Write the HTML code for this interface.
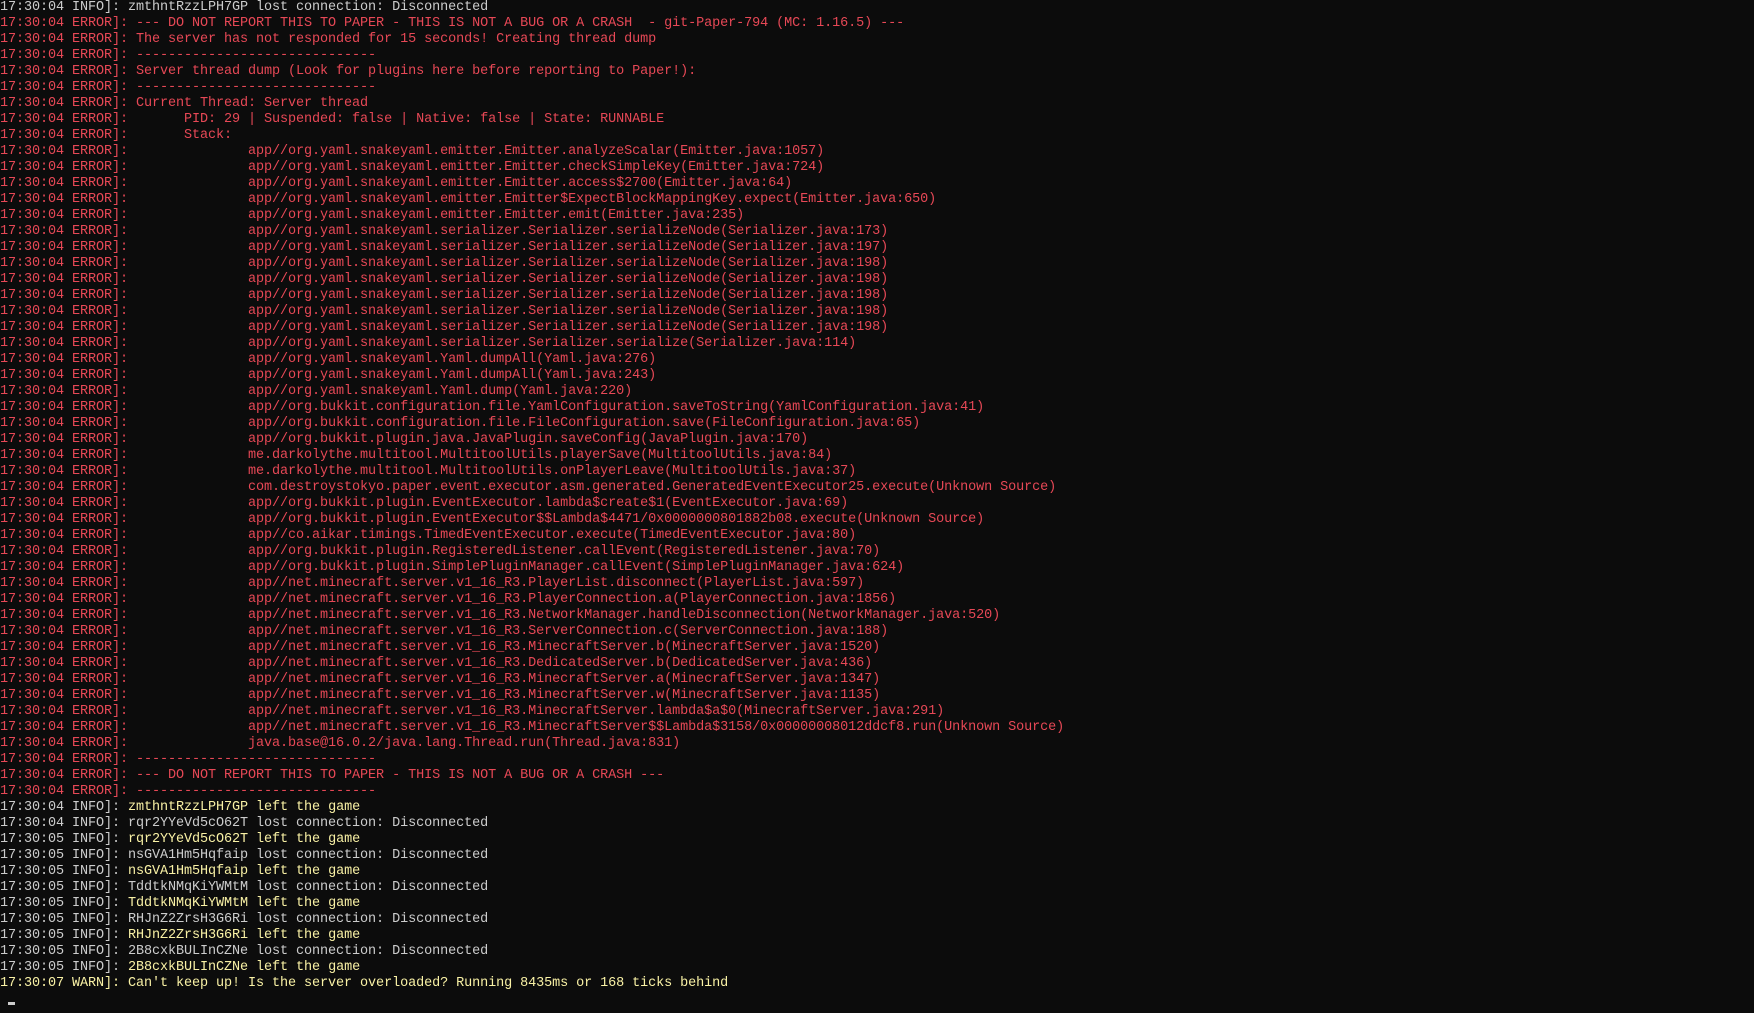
<!DOCTYPE html>
<html><head><meta charset="utf-8"><style>
html,body{margin:0;padding:0;background:#0c0c0c;width:1754px;height:1013px;overflow:hidden}
pre{margin:0;position:absolute;left:0;top:0px;font-family:"Liberation Mono",monospace;font-size:13.5px;letter-spacing:-0.1px;line-height:16px;color:#cccccc;white-space:pre}
.e{color:#e74856}.y{color:#f9f1a5}
#cur{position:absolute;left:8px;top:1002px;width:7px;height:3px;background:#cccccc}
</style></head><body><pre>17:30:04 INFO]: zmthntRzzLPH7GP lost connection: Disconnected
<span class="e">17:30:04 ERROR]: --- DO NOT REPORT THIS TO PAPER - THIS IS NOT A BUG OR A CRASH  - git-Paper-794 (MC: 1.16.5) ---
17:30:04 ERROR]: The server has not responded for 15 seconds! Creating thread dump
17:30:04 ERROR]: ------------------------------
17:30:04 ERROR]: Server thread dump (Look for plugins here before reporting to Paper!):
17:30:04 ERROR]: ------------------------------
17:30:04 ERROR]: Current Thread: Server thread
17:30:04 ERROR]:       PID: 29 | Suspended: false | Native: false | State: RUNNABLE
17:30:04 ERROR]:       Stack:
17:30:04 ERROR]:               app//org.yaml.snakeyaml.emitter.Emitter.analyzeScalar(Emitter.java:1057)
17:30:04 ERROR]:               app//org.yaml.snakeyaml.emitter.Emitter.checkSimpleKey(Emitter.java:724)
17:30:04 ERROR]:               app//org.yaml.snakeyaml.emitter.Emitter.access$2700(Emitter.java:64)
17:30:04 ERROR]:               app//org.yaml.snakeyaml.emitter.Emitter$ExpectBlockMappingKey.expect(Emitter.java:650)
17:30:04 ERROR]:               app//org.yaml.snakeyaml.emitter.Emitter.emit(Emitter.java:235)
17:30:04 ERROR]:               app//org.yaml.snakeyaml.serializer.Serializer.serializeNode(Serializer.java:173)
17:30:04 ERROR]:               app//org.yaml.snakeyaml.serializer.Serializer.serializeNode(Serializer.java:197)
17:30:04 ERROR]:               app//org.yaml.snakeyaml.serializer.Serializer.serializeNode(Serializer.java:198)
17:30:04 ERROR]:               app//org.yaml.snakeyaml.serializer.Serializer.serializeNode(Serializer.java:198)
17:30:04 ERROR]:               app//org.yaml.snakeyaml.serializer.Serializer.serializeNode(Serializer.java:198)
17:30:04 ERROR]:               app//org.yaml.snakeyaml.serializer.Serializer.serializeNode(Serializer.java:198)
17:30:04 ERROR]:               app//org.yaml.snakeyaml.serializer.Serializer.serializeNode(Serializer.java:198)
17:30:04 ERROR]:               app//org.yaml.snakeyaml.serializer.Serializer.serialize(Serializer.java:114)
17:30:04 ERROR]:               app//org.yaml.snakeyaml.Yaml.dumpAll(Yaml.java:276)
17:30:04 ERROR]:               app//org.yaml.snakeyaml.Yaml.dumpAll(Yaml.java:243)
17:30:04 ERROR]:               app//org.yaml.snakeyaml.Yaml.dump(Yaml.java:220)
17:30:04 ERROR]:               app//org.bukkit.configuration.file.YamlConfiguration.saveToString(YamlConfiguration.java:41)
17:30:04 ERROR]:               app//org.bukkit.configuration.file.FileConfiguration.save(FileConfiguration.java:65)
17:30:04 ERROR]:               app//org.bukkit.plugin.java.JavaPlugin.saveConfig(JavaPlugin.java:170)
17:30:04 ERROR]:               me.darkolythe.multitool.MultitoolUtils.playerSave(MultitoolUtils.java:84)
17:30:04 ERROR]:               me.darkolythe.multitool.MultitoolUtils.onPlayerLeave(MultitoolUtils.java:37)
17:30:04 ERROR]:               com.destroystokyo.paper.event.executor.asm.generated.GeneratedEventExecutor25.execute(Unknown Source)
17:30:04 ERROR]:               app//org.bukkit.plugin.EventExecutor.lambda$create$1(EventExecutor.java:69)
17:30:04 ERROR]:               app//org.bukkit.plugin.EventExecutor$$Lambda$4471/0x0000000801882b08.execute(Unknown Source)
17:30:04 ERROR]:               app//co.aikar.timings.TimedEventExecutor.execute(TimedEventExecutor.java:80)
17:30:04 ERROR]:               app//org.bukkit.plugin.RegisteredListener.callEvent(RegisteredListener.java:70)
17:30:04 ERROR]:               app//org.bukkit.plugin.SimplePluginManager.callEvent(SimplePluginManager.java:624)
17:30:04 ERROR]:               app//net.minecraft.server.v1_16_R3.PlayerList.disconnect(PlayerList.java:597)
17:30:04 ERROR]:               app//net.minecraft.server.v1_16_R3.PlayerConnection.a(PlayerConnection.java:1856)
17:30:04 ERROR]:               app//net.minecraft.server.v1_16_R3.NetworkManager.handleDisconnection(NetworkManager.java:520)
17:30:04 ERROR]:               app//net.minecraft.server.v1_16_R3.ServerConnection.c(ServerConnection.java:188)
17:30:04 ERROR]:               app//net.minecraft.server.v1_16_R3.MinecraftServer.b(MinecraftServer.java:1520)
17:30:04 ERROR]:               app//net.minecraft.server.v1_16_R3.DedicatedServer.b(DedicatedServer.java:436)
17:30:04 ERROR]:               app//net.minecraft.server.v1_16_R3.MinecraftServer.a(MinecraftServer.java:1347)
17:30:04 ERROR]:               app//net.minecraft.server.v1_16_R3.MinecraftServer.w(MinecraftServer.java:1135)
17:30:04 ERROR]:               app//net.minecraft.server.v1_16_R3.MinecraftServer.lambda$a$0(MinecraftServer.java:291)
17:30:04 ERROR]:               app//net.minecraft.server.v1_16_R3.MinecraftServer$$Lambda$3158/0x00000008012ddcf8.run(Unknown Source)
17:30:04 ERROR]:               java.base@16.0.2/java.lang.Thread.run(Thread.java:831)
17:30:04 ERROR]: ------------------------------
17:30:04 ERROR]: --- DO NOT REPORT THIS TO PAPER - THIS IS NOT A BUG OR A CRASH ---
17:30:04 ERROR]: ------------------------------</span>
17:30:04 INFO]: <span class="y">zmthntRzzLPH7GP left the game</span>
17:30:04 INFO]: rqr2YYeVd5cO62T lost connection: Disconnected
17:30:05 INFO]: <span class="y">rqr2YYeVd5cO62T left the game</span>
17:30:05 INFO]: nsGVA1Hm5Hqfaip lost connection: Disconnected
17:30:05 INFO]: <span class="y">nsGVA1Hm5Hqfaip left the game</span>
17:30:05 INFO]: TddtkNMqKiYWMtM lost connection: Disconnected
17:30:05 INFO]: <span class="y">TddtkNMqKiYWMtM left the game</span>
17:30:05 INFO]: RHJnZ2ZrsH3G6Ri lost connection: Disconnected
17:30:05 INFO]: <span class="y">RHJnZ2ZrsH3G6Ri left the game</span>
17:30:05 INFO]: 2B8cxkBULInCZNe lost connection: Disconnected
17:30:05 INFO]: <span class="y">2B8cxkBULInCZNe left the game</span>
<span class="y">17:30:07 WARN]: Can't keep up! Is the server overloaded? Running 8435ms or 168 ticks behind</span></pre>
<div id="cur"></div>
</body></html>
